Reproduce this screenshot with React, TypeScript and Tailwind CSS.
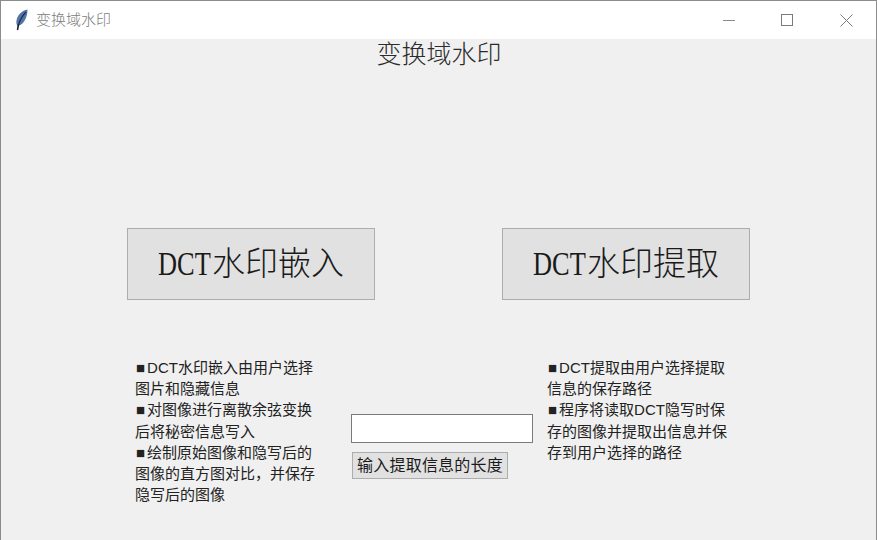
const sans = "font-['Liberation_Sans','Noto_Sans_CJK_SC',sans-serif]";
const serif = "font-['Liberation_Serif','Noto_Sans_CJK_SC',serif]";

function Feather() {
  return (
    <svg width="14" height="22" viewBox="0 0 14 22">
      <path d="M12.500 0.500C7 1.500 2.500 6 1.500 11.500c-0.400 2.200 0 4 1 5.500l1.500 -0.500C9 15 12.500 8 12.500 0.500Z" fill="#5274a6" />
      <path d="M11 3C8 6 5 11 3.500 16" stroke="#1d2c4a" strokeWidth="1.200" fill="none" />
      <path d="M3.500 15.500L2.500 21" stroke="#111827" strokeWidth="1.500" />
    </svg>
  );
}

function TitleBar() {
  return (
    <div className="flex h-[38px] shrink-0 items-center bg-white">
      <div className="ml-[13px] mr-[7px] flex w-[15px] justify-center">
        <Feather />
      </div>
      <span className={`${sans} text-[15px] font-light text-[#7c7c7c]`}>变换域水印</span>
      <div className="ml-auto flex items-center">
        <div className="flex w-[58px] justify-center">
          <svg width="12" height="12" viewBox="0 0 12 12">
            <path d="M0 6.500H12" stroke="#8a8a8a" />
          </svg>
        </div>
        <div className="flex w-[58px] justify-center">
          <svg width="12" height="12" viewBox="0 0 12 12">
            <rect x="0.500" y="0.500" width="11" height="11" fill="none" stroke="#7a7a7a" />
          </svg>
        </div>
        <div className="flex w-[60px] justify-center">
          <svg width="13" height="13" viewBox="0 0 13 13">
            <path d="M0.500 0.500L12.500 12.500M12.500 0.500L0.500 12.500" stroke="#7a7a7a" />
          </svg>
        </div>
      </div>
    </div>
  );
}

function BigButton({ label }: { label: string }) {
  return (
    <button className={`${serif} flex h-[72px] w-[248px] items-center justify-center border border-[#adadad] bg-[#e1e1e1] text-[33px] font-light leading-none text-[#1a1a1a]`}>
      <span className="inline-block w-[54px] origin-left scale-x-[0.8] whitespace-nowrap text-left">DCT</span>
      {label}
    </button>
  );
}

function Bullet() {
  return <span className="pl-[1px] pr-[2px]">■</span>;
}

export default function App() {
  return (
    <div className="flex h-[540px] w-[877px] flex-col overflow-hidden border-x border-t border-[#8c8c8c] bg-[#f0f0f0]">
      <TitleBar />
      <h1 className={`${serif} mt-[1px] h-[30px] pl-[1px] text-center text-[25px] font-light leading-[30px] text-[#2b2b2b]`}>
        变换域水印
      </h1>
      <div className="mt-[158px] flex gap-[127px] pl-[126px]">
        <BigButton label="水印嵌入" />
        <BigButton label="水印提取" />
      </div>
      <div className={`${sans} mt-[56px] flex text-[15px] leading-[21.200px] text-[#222]`}>
        <p className="ml-[134px] w-[216px] pt-[1px]">
          <Bullet />
          DCT水印嵌入由用户选择
          <br />
          图片和隐藏信息
          <br />
          <Bullet />
          对图像进行离散余弦变换
          <br />
          后将秘密信息写入
          <br />
          <Bullet />
          绘制原始图像和隐写后的
          <br />
          图像的直方图对比，并保存
          <br />
          隐写后的图像
        </p>
        <div className="mt-[58px] flex w-[183px] flex-col items-start">
          <input className="h-[29px] w-[182px] border border-[#7a7a7a] bg-white" />
          <button className="ml-[1px] mt-[9px] h-[27px] w-[156px] border border-[#adadad] bg-[#e1e1e1] text-[16px] leading-none tracking-[0.2px] text-[#1a1a1a]">
            输入提取信息的长度
          </button>
        </div>
        <p className="ml-[13px] pt-[1px]">
          <Bullet />
          DCT提取由用户选择提取
          <br />
          信息的保存路径
          <br />
          <Bullet />
          程序将读取DCT隐写时保
          <br />
          存的图像并提取出信息并保
          <br />
          存到用户选择的路径
        </p>
      </div>
    </div>
  );
}
